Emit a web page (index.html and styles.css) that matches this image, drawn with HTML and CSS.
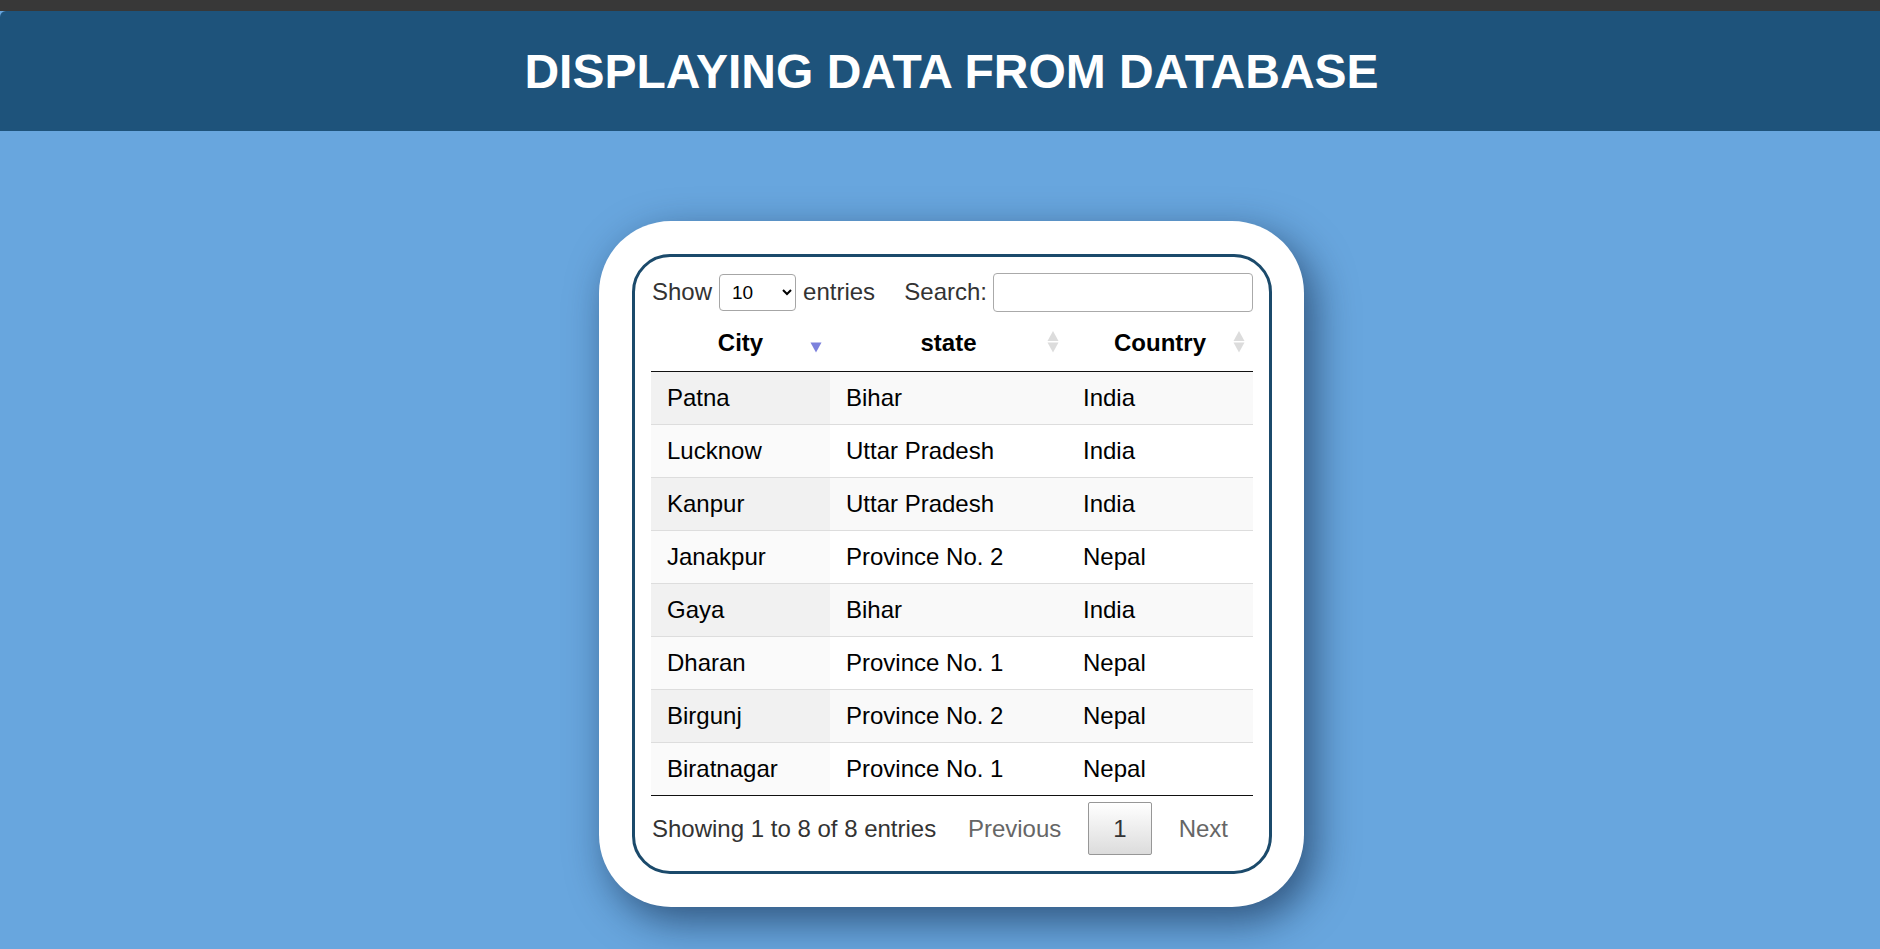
FILE: index.html
```html
<!DOCTYPE html>
<html lang="en">
<head>
<meta charset="utf-8">
<title>Displaying Data From Database</title>
<link rel="stylesheet" href="styles.css">
</head>
<body>
<div class="topbar"></div>
<header class="site-header">
  <h1 class="title">DISPLAYING DATA FROM DATABASE</h1>
</header>
<main class="main">
  <div class="card">
    <div class="table-box">
      <div class="controls">
        <label class="length">Show
          <select class="length-select">
            <option>10</option>
            <option>25</option>
            <option>50</option>
            <option>100</option>
          </select>
          entries</label>
        <label class="search">Search:<input class="search-input" type="search"></label>
      </div>
      <table class="data">
        <colgroup>
          <col class="col-city">
          <col class="col-state">
          <col class="col-country">
        </colgroup>
        <thead>
          <tr>
            <th>City
              <svg class="sort" width="12" height="24" viewBox="0 0 12 24"><path d="M0.5 12.5 H11.5 L6 22.5 Z" fill="#7c81dc"/></svg>
            </th>
            <th>state
              <svg class="sort" width="12" height="24" viewBox="0 0 12 24"><path d="M0.5 11 H11.5 L6 1 Z" fill="#dcdcdc"/><path d="M0.5 12.5 H11.5 L6 22.5 Z" fill="#dcdcdc"/></svg>
            </th>
            <th>Country
              <svg class="sort" width="12" height="24" viewBox="0 0 12 24"><path d="M0.5 11 H11.5 L6 1 Z" fill="#dcdcdc"/><path d="M0.5 12.5 H11.5 L6 22.5 Z" fill="#dcdcdc"/></svg>
            </th>
          </tr>
        </thead>
        <tbody>
          <tr class="odd"><td>Patna</td><td>Bihar</td><td>India</td></tr>
          <tr class="even"><td>Lucknow</td><td>Uttar Pradesh</td><td>India</td></tr>
          <tr class="odd"><td>Kanpur</td><td>Uttar Pradesh</td><td>India</td></tr>
          <tr class="even"><td>Janakpur</td><td>Province No. 2</td><td>Nepal</td></tr>
          <tr class="odd"><td>Gaya</td><td>Bihar</td><td>India</td></tr>
          <tr class="even"><td>Dharan</td><td>Province No. 1</td><td>Nepal</td></tr>
          <tr class="odd"><td>Birgunj</td><td>Province No. 2</td><td>Nepal</td></tr>
          <tr class="even"><td>Biratnagar</td><td>Province No. 1</td><td>Nepal</td></tr>
        </tbody>
      </table>
      <div class="footer">
        <div class="info">Showing 1 to 8 of 8 entries</div>
        <div class="paginate">
          <span class="page-btn disabled">Previous</span>
          <span class="page-btn current">1</span>
          <span class="page-btn disabled">Next</span>
        </div>
      </div>
    </div>
  </div>
</main>
</body>
</html>
```
FILE: styles.css
```css
* { box-sizing: border-box; }

html, body {
  margin: 0;
  padding: 0;
}

body {
  background: #68a6de;
  font-family: "Liberation Sans", Arial, sans-serif;
  min-height: 949px;
  overflow: hidden;
}

.topbar {
  height: 11px;
  background: #383838;
}

.site-header {
  height: 120px;
  background: #1e537b;
  border-top-left-radius: 6px;
  display: flex;
  align-items: center;
  justify-content: center;
  padding-left: 23px;
}

.title {
  margin: 0;
  color: #ffffff;
  font-size: 48px;
  font-weight: bold;
  line-height: normal;
}

.main {
  display: flex;
  justify-content: center;
  padding-top: 90px;
  padding-left: 23px;
}

.card {
  background: #ffffff;
  border-radius: 72px;
  padding: 33px 32px 33px 33px;
  box-shadow: 10px 14px 40px rgba(10, 30, 60, 0.6);
}

.table-box {
  width: 640px;
  border: 3px solid #1b4a6b;
  border-radius: 38px;
  padding: 16px;
  font-size: 24px;
  color: #333;
}

.controls {
  display: flex;
  justify-content: space-between;
  align-items: center;
  height: 40px;
  margin-top: -1px;
  margin-bottom: 1px;
}

.length {
  display: flex;
  align-items: center;
  gap: 7px;
  margin-left: 1px;
}

.length-select {
  width: 77px;
  height: 37px;
  border: 1px solid #a6a6a6;
  border-radius: 4px;
  background: #fff;
  font-family: "Liberation Sans", Arial, sans-serif;
  font-size: 19px;
  color: #000;
  padding: 0 4px 0 8px;
}

.search {
  display: flex;
  align-items: center;
}

.search-input {
  width: 260px;
  height: 39px;
  margin-left: 6px;
  border: 1px solid #aaa;
  border-radius: 4px;
  font-size: 18px;
}

.data {
  width: 602px;
  border-collapse: collapse;
  border-spacing: 0;
  table-layout: fixed;
  color: #000;
}

.col-city { width: 179px; }
.col-state { width: 237px; }
.col-country { width: 186px; }

.data th {
  position: relative;
  font-weight: bold;
  text-align: center;
  line-height: 27px;
  padding: 16px 16px 15px;
  border-bottom: 1px solid #111;
}

.sort {
  position: absolute;
  right: 8px;
  top: 17px;
}

.data td {
  line-height: 28px;
  padding: 12px 16px;
  text-align: left;
}

.data tbody tr + tr td {
  border-top: 1px solid #dddddd;
}

.data tbody tr:last-child td {
  border-bottom: 1px solid #111;
}

.data tr.odd td { background: #f9f9f9; }
.data tr.odd td:first-child { background: #f1f1f1; }
.data tr.even td { background: #ffffff; }
.data tr.even td:first-child { background: #fafafa; }

.footer {
  display: flex;
  justify-content: space-between;
  align-items: center;
  margin-top: 6px;
}

.info {
  color: #333;
  margin-left: 1px;
}

.paginate {
  display: flex;
  align-items: center;
}

.page-btn {
  display: inline-block;
  line-height: 27px;
  padding: 12px 24px;
  margin-left: 2px;
  border: 1px solid transparent;
  border-radius: 2px;
  color: #333;
}

.page-btn.disabled {
  color: #666;
}

.page-btn.current {
  border: 1px solid #979797;
  background: linear-gradient(to bottom, #ffffff 0%, #dcdcdc 100%);
}
```
